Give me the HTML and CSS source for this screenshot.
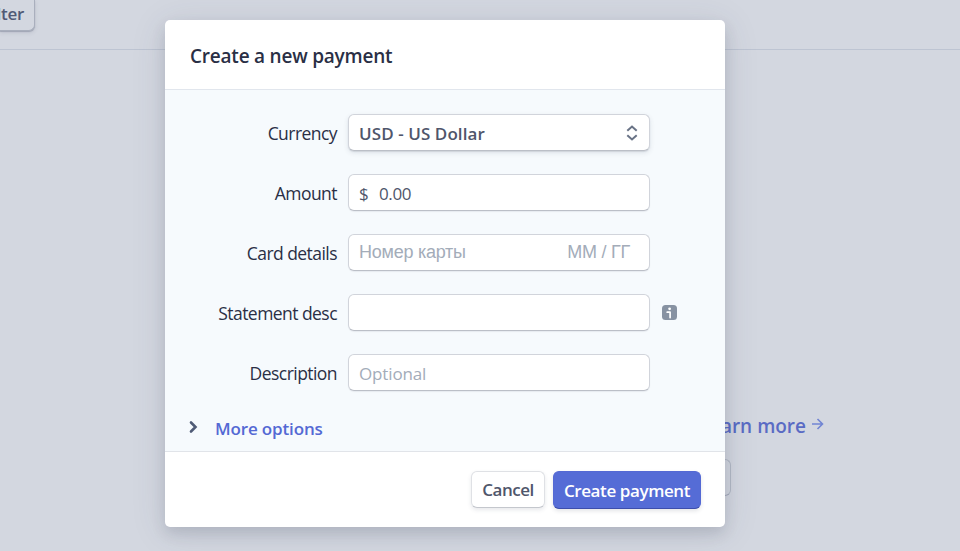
FILE: index.html
```html
<!DOCTYPE html>
<html lang="en">
<head>
<meta charset="utf-8">
<title>Create a new payment</title>
<link rel="stylesheet" href="styles.css">
</head>
<body>
<div class="page">
  <div class="toolbar"><button class="filter"><span class="filter-text">Filter</span></button></div>
  <div class="empty-state">
    <a class="learn">Learn more
      <svg class="arrow" width="12" height="12" viewBox="0 0 12 12"><path d="M0 6h10.5M5.5 1l5 5-5 5" fill="none" stroke="#7185d3" stroke-width="1.6"/></svg>
    </a>
    <div class="page-button"></div>
  </div>
</div>
<div class="overlay">
  <form class="modal">
    <header class="modal-header"><h1 class="title">Create a new payment</h1></header>
    <div class="modal-body">
      <div class="row">
        <label class="label">Currency</label>
        <div class="control select"><span class="value">USD - US Dollar</span>
          <svg class="updown" width="12" height="16" viewBox="0 0 12 16"><path d="M1.3 5.8 6 1.5l4.7 4.3M1.3 10.2 6 14.5l4.7-4.3" fill="none" stroke="#697386" stroke-width="2"/></svg>
        </div>
      </div>
      <div class="row">
        <label class="label">Amount</label>
        <div class="control"><span class="dollar">$</span><span class="amount">0.00</span></div>
      </div>
      <div class="row">
        <label class="label">Card details</label>
        <div class="control card"><span>Номер карты</span><span class="expiry">ММ / ГГ</span></div>
      </div>
      <div class="row">
        <label class="label">Statement desc</label>
        <div class="control"></div>
        <svg class="info" width="15" height="15" viewBox="0 0 15 15"><rect width="15" height="15" rx="3.5" fill="#8792a2"/><circle cx="7.6" cy="3.8" r="1.4" fill="#fff"/><path d="M5.2 7.2h2.9v5.4" fill="none" stroke="#fff" stroke-width="1.7" stroke-linecap="round" stroke-linejoin="round"/></svg>
      </div>
      <div class="row">
        <label class="label">Description</label>
        <div class="control"><span class="placeholder">Optional</span></div>
      </div>
      <a class="more"><svg class="chevron" width="10" height="14" viewBox="0 0 10 14"><path d="m2 2.5 4.5 4.5L2 11.5" fill="none" stroke="#4f5b76" stroke-width="2.6" stroke-linecap="round"/></svg><span class="more-text">More options</span></a>
    </div>
    <footer class="modal-footer">
      <button type="button" class="button cancel"><span>Cancel</span></button>
      <button type="button" class="button primary"><span>Create payment</span></button>
    </footer>
  </form>
</div>
</body>
</html>
```
FILE: styles.css
```css
* { box-sizing: border-box; }
body {
  margin: 0;
  height: 551px;
  overflow: hidden;
  font-family: "Open Sans", "Noto Sans", sans-serif;
  font-size: 17px;
  color: #2a2f45;
  background: #d3d7e0;
}
button { font: inherit; }
.page { height: 551px; }
.toolbar { height: 50px; border-bottom: 1px solid #bdc4d2; }
.filter {
  display: flex;
  align-items: center;
  justify-content: flex-end;
  width: 35px;
  height: 31px;
  padding: 0 10px 4px 0;
  border: 1px solid #a9afbd;
  border-width: 0 1px 1px 0;
  border-radius: 0 0 6px 0;
  background: #d3d7e0;
  box-shadow: 0 1px 1px #a0a6b5, 0 2px 4px rgba(60, 66, 87, .12);
  color: #505a75;
  font-weight: 600;
  letter-spacing: -.3px;
}
.empty-state {
  display: flex;
  flex-direction: column;
  width: 824px;
  padding-top: 362px;
}
.learn {
  display: flex;
  align-items: center;
  justify-content: flex-end;
  gap: 6px;
  height: 28px;
  font-size: 19px;
  font-weight: 600;
  color: #5a6bc4;
}
.arrow { margin-bottom: 4px; }
.page-button {
  width: 131px;
  height: 37px;
  margin: 19px 0 0 600px;
  border: 1px solid #b2b8c5;
  border-bottom-color: #a4abba;
  border-radius: 6px;
}
.overlay { position: absolute; inset: 0; padding-top: 20px; }
.modal {
  width: 560px;
  height: 507px;
  margin-left: 165px;
  border-radius: 5px;
  background: #fff;
  box-shadow: 0 7px 14px rgba(60, 66, 87, .16), 0 5px 36px rgba(60, 66, 87, .12);
}
.modal-header {
  display: flex;
  align-items: center;
  height: 70px;
  padding: 2px 25px 0;
  border-bottom: 1px solid #e1e6ed;
}
.title { margin: 0; font-size: 19px; line-height: 28px; font-weight: 600; letter-spacing: -.22px; }
.modal-body {
  display: flex;
  flex-direction: column;
  gap: 23px;
  height: 362px;
  padding: 24px 24px 0 0;
  border-bottom: 1px solid #e1e4e9;
  background: #f6fafd;
}
.row { display: flex; align-items: center; height: 37px; }
.label {
  width: 172px;
  margin-right: 11px;
  padding-top: 1px;
  text-align: right;
  white-space: nowrap;
  font-size: 17.5px;
  letter-spacing: -.55px;
}
.control {
  display: flex;
  align-items: center;
  width: 302px;
  height: 37px;
  padding: 2px 10px 0;
  border: 1px solid #d1d4db;
  border-bottom-color: #bbbfc7;
  border-radius: 6px;
  background: #fff;
  box-shadow: 0 1px 1px rgba(60, 66, 87, .08);
}
.select {
  justify-content: space-between;
  padding-right: 11px;
  box-shadow: 0 1px 1px rgba(60, 66, 87, .12), 0 2px 5px rgba(60, 66, 87, .12);
  font-weight: 600;
  letter-spacing: .08px;
  color: #4f566b;
}
.updown { margin-bottom: 2px; }
.dollar { width: 20px; color: #4f566b; }
.amount { color: #4f566b; letter-spacing: -.4px; }
.card {
  justify-content: space-between;
  padding: 0 19px 1px 10px;
  font-family: "Liberation Sans", Arial, sans-serif;
  font-size: 18px;
  letter-spacing: -.25px;
  color: #a3acb9;
}
.placeholder { color: #a3acb9; letter-spacing: -.15px; }
.info { margin-left: 12px; }
.more {
  display: flex;
  align-items: center;
  gap: 16px;
  height: 28px;
  margin: 0 0 0 24px;
  color: #5469d4;
  font-weight: 600;
  letter-spacing: -.15px;
}
.chevron { margin-bottom: 2px; }
.modal-footer {
  display: flex;
  justify-content: flex-end;
  gap: 8px;
  padding: 19px 24px 0;
}
.button {
  display: flex;
  align-items: center;
  justify-content: center;
  height: 37px;
  padding: 0;
  border-radius: 6px;
  white-space: nowrap;
}
.cancel {
  width: 74px;
  border: 1px solid #dfe1e5;
  border-bottom-color: #c4c7cd;
  background: #fff;
  box-shadow: 0 2px 4px rgba(60, 66, 87, .12);
  color: #4f566b;
  font-weight: 600;
  letter-spacing: -.5px;
}
.primary {
  width: 148px;
  height: 38px;
  border: 1px solid #5469d4;
  border-bottom-color: #3d4eac;
  background: #556cd6;
  box-shadow: 0 2px 4px rgba(60, 66, 87, .14);
  color: #fff;
  font-weight: 600;
  letter-spacing: -.4px;
}
```
